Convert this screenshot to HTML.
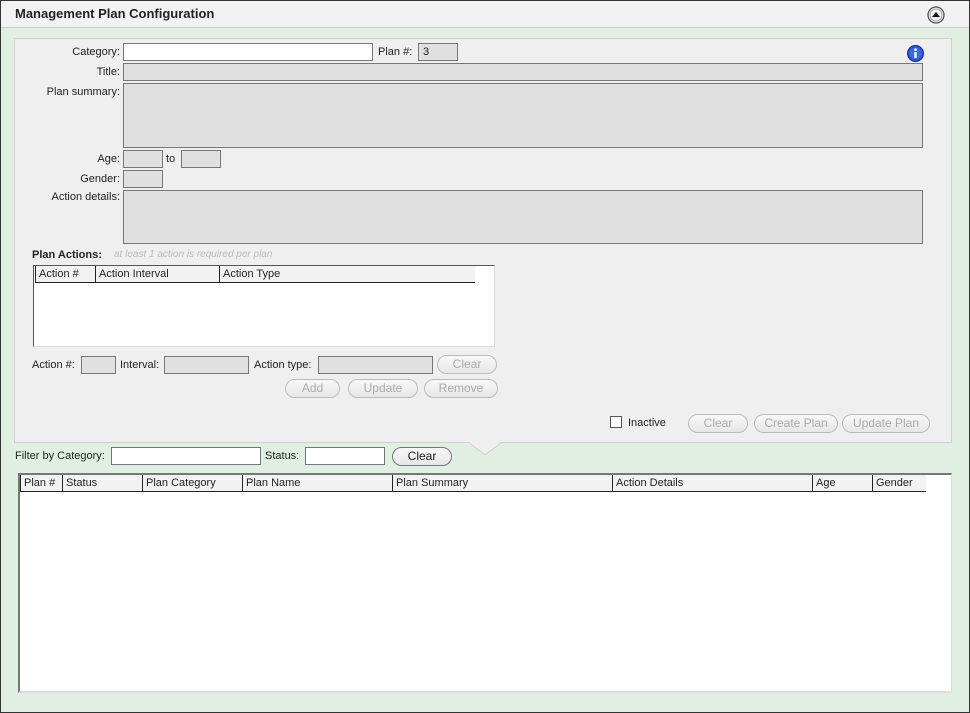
<!DOCTYPE html>
<html><head><style>
*{box-sizing:border-box}
body{margin:0;width:970px;height:713px;overflow:hidden;font-family:"Liberation Sans",sans-serif;font-size:11px;color:#222}
#root{position:absolute;left:0;top:0;width:970px;height:713px;background:#e1efe2;}
#frame{position:absolute;left:0;top:0;width:970px;height:713px;border:1px solid #333;pointer-events:none}
.a{position:absolute}
.hdr{left:0;top:0;width:970px;height:28px;background:#f2f2f2;border-bottom:1px solid #ccc}
.panel{left:14px;top:38px;width:938px;height:405px;background:#efefef;border:1px solid #d0d0d0}
.lbl{position:absolute;white-space:nowrap;line-height:14px}
.r{text-align:right}
.in{position:absolute;background:#e0e0e0;border:1px solid #777;height:18px}
.w{background:#fff}
.btn{position:absolute;height:19px;border:1px solid #bbb;border-radius:10px;background:linear-gradient(#f8f8f8,#e6e6e6);color:#aaa;text-align:center;line-height:17px;font-size:12px}
.th{position:absolute;top:0;height:17px;border-left:1px solid #222;border-bottom:1px solid #222;padding-left:3px;line-height:16px;background:#f2f2f2;white-space:nowrap;overflow:hidden}
</style></head><body><div id="root">
<div class="a hdr"><div class="lbl" style="left:15px;top:7px;font-weight:bold;font-size:13px">Management Plan Configuration</div>
<svg class="a" style="left:927px;top:6px" width="18" height="18"><circle cx="9" cy="9" r="8" fill="#eee" stroke="#555" stroke-width="1.3"/><circle cx="9" cy="9" r="6" fill="none" stroke="#aaa"/><path d="M5 11 L9 6 L13 11Z" fill="#111"/></svg></div>
<div class="a panel"></div>
<div class="lbl r" style="left:40px;width:80px;top:45px">Category:</div>
<div class="in w" style="left:123px;top:43px;width:250px"></div>
<div class="lbl" style="left:378px;top:45px">Plan #:</div>
<div class="in" style="left:418px;top:43px;width:40px;padding-left:4px;line-height:16px">3</div>
<svg class="a" style="left:907px;top:45px" width="17" height="17"><circle cx="8.5" cy="8.5" r="8" fill="#2a4fd0" stroke="#1a2f90"/><circle cx="8.5" cy="8.5" r="6" fill="#3c6ae8"/><rect x="7.3" y="7" width="2.4" height="6" fill="#fff"/><circle cx="8.5" cy="4.7" r="1.3" fill="#fff"/></svg>
<div class="lbl r" style="left:40px;width:80px;top:65px">Title:</div>
<div class="in" style="left:123px;top:63px;width:800px"></div>
<div class="lbl r" style="left:20px;width:100px;top:85px">Plan summary:</div>
<div class="in" style="left:123px;top:83px;width:800px;height:65px"></div>
<div class="lbl r" style="left:40px;width:80px;top:152px">Age:</div>
<div class="in" style="left:123px;top:150px;width:40px"></div>
<div class="lbl" style="left:166px;top:152px">to</div>
<div class="in" style="left:181px;top:150px;width:40px"></div>
<div class="lbl r" style="left:40px;width:80px;top:172px">Gender:</div>
<div class="in" style="left:123px;top:170px;width:40px"></div>
<div class="lbl r" style="left:20px;width:100px;top:190px">Action details:</div>
<div class="in" style="left:123px;top:190px;width:800px;height:54px"></div>
<div class="lbl" style="left:32px;top:248px;font-weight:bold">Plan Actions:</div>
<div class="lbl" style="left:114px;top:248px;font-style:italic;color:#bbb;font-size:10px">at least 1 action is required per plan</div>
<div class="a" style="left:33px;top:265px;width:462px;height:82px;background:#fff;border:1px solid #555;border-right-color:#ddd;border-bottom-color:#ddd">
<div class="th" style="left:1px;width:60px">Action #</div><div class="th" style="left:61px;width:124px">Action Interval</div><div class="th" style="left:185px;width:256px">Action Type</div></div>
<div class="lbl" style="left:32px;top:358px">Action #:</div>
<div class="in" style="left:81px;top:356px;width:35px"></div>
<div class="lbl" style="left:120px;top:358px">Interval:</div>
<div class="in" style="left:164px;top:356px;width:85px"></div>
<div class="lbl" style="left:254px;top:358px">Action type:</div>
<div class="in" style="left:318px;top:356px;width:115px"></div>
<div class="btn" style="left:437px;top:355px;width:60px">Clear</div>
<div class="btn" style="left:285px;top:379px;width:55px">Add</div>
<div class="btn" style="left:348px;top:379px;width:70px">Update</div>
<div class="btn" style="left:424px;top:379px;width:74px">Remove</div>
<div class="a" style="left:610px;top:416px;width:12px;height:12px;background:#fff;border:1px solid #555"></div>
<div class="lbl" style="left:628px;top:416px">Inactive</div>
<div class="btn" style="left:688px;top:414px;width:60px">Clear</div>
<div class="btn" style="left:754px;top:414px;width:84px">Create Plan</div>
<div class="btn" style="left:842px;top:414px;width:88px">Update Plan</div>
<svg class="a" style="left:468px;top:442px" width="34" height="14"><path d="M0 0 L17 13 L34 0Z" fill="#efefef"/><path d="M0 0 L17 13 L34 0" fill="none" stroke="#d0d0d0"/></svg>
<div class="lbl" style="left:15px;top:449px">Filter by Category:</div>
<div class="in w" style="left:111px;top:447px;width:150px"></div>
<div class="lbl" style="left:265px;top:449px">Status:</div>
<div class="in w" style="left:305px;top:447px;width:80px"></div>
<div class="btn" style="left:392px;top:447px;width:60px;color:#222;border-color:#777">Clear</div>
<div class="a" style="left:18px;top:473px;width:934px;height:220px;background:#fff;border:2px solid #777;border-right:1px solid #ddd;border-bottom:2px solid #ddd">
<div class="th" style="left:0;width:42px">Plan #</div><div class="th" style="left:42px;width:80px">Status</div><div class="th" style="left:122px;width:100px">Plan Category</div><div class="th" style="left:222px;width:150px">Plan Name</div><div class="th" style="left:372px;width:220px">Plan Summary</div><div class="th" style="left:592px;width:200px">Action Details</div><div class="th" style="left:792px;width:60px">Age</div><div class="th" style="left:852px;width:54px">Gender</div></div>
</div><div id="frame"></div></body></html>
